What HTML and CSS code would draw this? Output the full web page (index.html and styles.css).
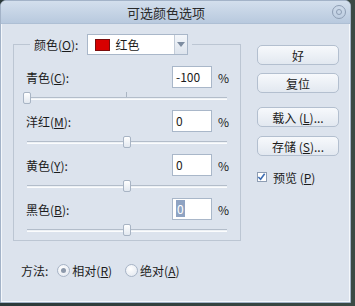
FILE: index.html
```html
<!DOCTYPE html>
<html lang="zh-CN">
<head>
    <meta charset="UTF-8">
    <title>可选颜色选项</title>
    <link rel="stylesheet" href="styles.css">
</head>
<body>
    <div class="window">
        <div class="titlebar">
            <span class="title">可选颜色选项</span>
            <span class="close">
                <svg width="16" height="16" viewBox="0 0 16 16">
                    <circle cx="8" cy="8" r="6.5" fill="none" stroke="#8d9db3" stroke-width="1"/>
                    <circle cx="8" cy="8" r="2.5" fill="none" stroke="#8d9db3" stroke-width="1"/>
                </svg>
            </span>
        </div>

        <div class="content">
            <div class="main">
                <fieldset class="group">
                    <legend class="group-head">
                        <span>颜色(<u>O</u>):</span>
                        <div class="select">
                            <span class="swatch"></span>
                            <span class="select-text">红色</span>
                            <span class="select-arrow"></span>
                        </div>
                    </legend>

                    <div class="row">
                        <span class="row-label">青色(<u>C</u>):</span>
                        <span class="field">-100</span>
                        <span class="pct">%</span>
                    </div>
                    <div class="slider">
                        <span class="tick"></span>
                        <span class="track"></span>
                        <span class="thumb thumb-min"></span>
                    </div>

                    <div class="row">
                        <span class="row-label">洋红(<u>M</u>):</span>
                        <span class="field">0</span>
                        <span class="pct">%</span>
                    </div>
                    <div class="slider">
                        <span class="tick"></span>
                        <span class="track"></span>
                        <span class="thumb"></span>
                    </div>

                    <div class="row">
                        <span class="row-label">黄色(<u>Y</u>):</span>
                        <span class="field">0</span>
                        <span class="pct">%</span>
                    </div>
                    <div class="slider">
                        <span class="tick"></span>
                        <span class="track"></span>
                        <span class="thumb"></span>
                    </div>

                    <div class="row">
                        <span class="row-label">黑色(<u>B</u>):</span>
                        <span class="field"><span class="sel">0</span></span>
                        <span class="pct">%</span>
                    </div>
                    <div class="slider last">
                        <span class="tick"></span>
                        <span class="track"></span>
                        <span class="thumb"></span>
                    </div>
                </fieldset>

                <div class="side">
                    <button class="btn">好</button>
                    <button class="btn btn-reset">复位</button>
                    <button class="btn btn-load">载入 (<u>L</u>)...</button>
                    <button class="btn btn-save">存储 (<u>S</u>)...</button>
                    <label class="check">
                        <span class="check-box">
                            <svg width="10" height="10" viewBox="0 0 10 10">
                                <path d="M1.5 5 L4 7.5 L8.5 1.5" fill="none" stroke="#3f6fb4" stroke-width="1.8"/>
                            </svg>
                        </span>
                        <span>预览 (<u>P</u>)</span>
                    </label>
                </div>
            </div>

            <div class="method">
                <span class="method-label">方法:</span>
                <span class="radio checked"></span>
                <span class="radio-label">相对(<u>R</u>)</span>
                <span class="radio"></span>
                <span class="radio-label">绝对(<u>A</u>)</span>
            </div>
        </div>
    </div>
</body>
</html>
```

FILE: styles.css
```css
* {
    margin: 0;
    padding: 0;
    box-sizing: border-box;
}

body {
    width: 355px;
    height: 306px;
    overflow: hidden;
    background: linear-gradient(90deg, #2c3a3a, #3b4a45);
    font-family: "Noto Sans CJK SC", "Liberation Sans", sans-serif;
    font-size: 12px;
    color: #1b1b1b;
}

u {
    text-decoration: underline;
}

.window {
    width: 351px;
    height: 303px;
    display: flex;
    flex-direction: column;
    background: #dce3ed;
    border: 1px solid #a3b3c8;
    border-radius: 6px 6px 0 0;
    box-shadow: inset 0 0 0 1px #f4f7fb;
    overflow: hidden;
}

/* barra de titulo */
.titlebar {
    height: 23px;
    flex: none;
    display: flex;
    align-items: center;
    padding-right: 3px;
    background: linear-gradient(#d3dfed, #b8c9de);
    border-bottom: 1px solid #aebfd4;
}

.title {
    flex: 1;
    text-align: center;
    font-size: 13px;
    color: #2a2a2a;
}

.close {
    width: 16px;
    height: 16px;
    display: flex;
}

.content {
    padding: 10px 0 0 12px;
}

.main {
    display: flex;
    align-items: flex-start;
}

/* grupo de cores */
.group {
    width: 228px;
    border: 1px solid #bcc6d3;
    padding: 10px 12px 0 12px;
    margin: 0;
}

.group-head {
    display: flex;
    align-items: center;
    gap: 9px;
    padding: 0 4px;
    margin-left: 4px;
}

.select {
    width: 101px;
    height: 21px;
    display: flex;
    align-items: center;
    padding-left: 7px;
    background: #fff;
    border: 1px solid #a9b7c9;
}

.swatch {
    width: 15px;
    height: 12px;
    background: #d80000;
    border: 1px solid #7a0c0c;
}

.select-text {
    margin-left: 5px;
}

.select-arrow {
    margin-left: auto;
    width: 13px;
    height: 19px;
    display: flex;
    align-items: center;
    justify-content: center;
    background: linear-gradient(#f3f6fa, #dde4ed);
    border-left: 1px solid #c3ccd8;
}

.select-arrow::after {
    content: "";
    border-left: 4px solid transparent;
    border-right: 4px solid transparent;
    border-top: 5px solid #7d8ca0;
}

.row {
    display: flex;
    align-items: center;
    height: 24px;
}

.row-label {
    flex: 1;
}

.field {
    width: 40px;
    height: 22px;
    line-height: 20px;
    padding-left: 3px;
    background: #fff;
    border: 1px solid #a9b7c9;
}

.sel {
    background: #8fa3c2;
    color: #fff;
    padding: 0 1px;
}

.pct {
    width: 10px;
    margin-left: 6px;
}

.slider {
    position: relative;
    height: 20px;
    margin: 0 1px;
}

.slider.last {
    height: 19px;
}

.track {
    display: block;
    position: relative;
    top: 8px;
    height: 3px;
    background: #edf1f5;
    border-top: 1px solid #b3bdca;
    border-bottom: 1px solid #fbfcfd;
}

.tick {
    position: absolute;
    left: 99px;
    top: 3px;
    width: 1px;
    height: 5px;
    background: #aab5c3;
}

.thumb {
    position: absolute;
    left: 96px;
    top: 3px;
    width: 8px;
    height: 12px;
    background: linear-gradient(#ffffff, #e2e8f0);
    border: 1px solid #a8b4c4;
    border-radius: 2px;
}

.thumb-min {
    left: -4px;
}

/* botoes */
.side {
    width: 82px;
    margin-left: 16px;
    padding-top: 11px;
    display: flex;
    flex-direction: column;
}

.btn {
    width: 82px;
    height: 20px;
    font: inherit;
    color: #1b1b1b;
    text-align: center;
    background: linear-gradient(#f7f9fc, #e2e8f0);
    border: 1px solid #b3bfcf;
    border-radius: 5px;
}

.btn-reset {
    margin-top: 8px;
}

.btn-load {
    margin-top: 14px;
}

.btn-save {
    margin-top: 9px;
}

.check {
    display: flex;
    align-items: center;
    gap: 6px;
    margin-top: 14px;
    height: 14px;
}

.check-box {
    width: 10px;
    height: 10px;
    display: flex;
    background: #fff;
    border: 1px solid #8e9db2;
}

.check-box svg {
    margin: -1px 0 0 -1px;
}

/* metodo */
.method {
    display: flex;
    align-items: center;
    height: 16px;
    margin: 21px 0 0 8px;
}

.method-label {
    margin-right: 9px;
}

.radio {
    width: 13px;
    height: 13px;
    display: flex;
    align-items: center;
    justify-content: center;
    border-radius: 50%;
    border: 1px solid #a7b4c6;
    background: radial-gradient(circle at 40% 35%, #ffffff, #dfe5ee);
}

.radio.checked::after {
    content: "";
    width: 5px;
    height: 5px;
    border-radius: 50%;
    background: #8d99ab;
}

.radio-label {
    margin: 0 13px 0 2px;
}
```
